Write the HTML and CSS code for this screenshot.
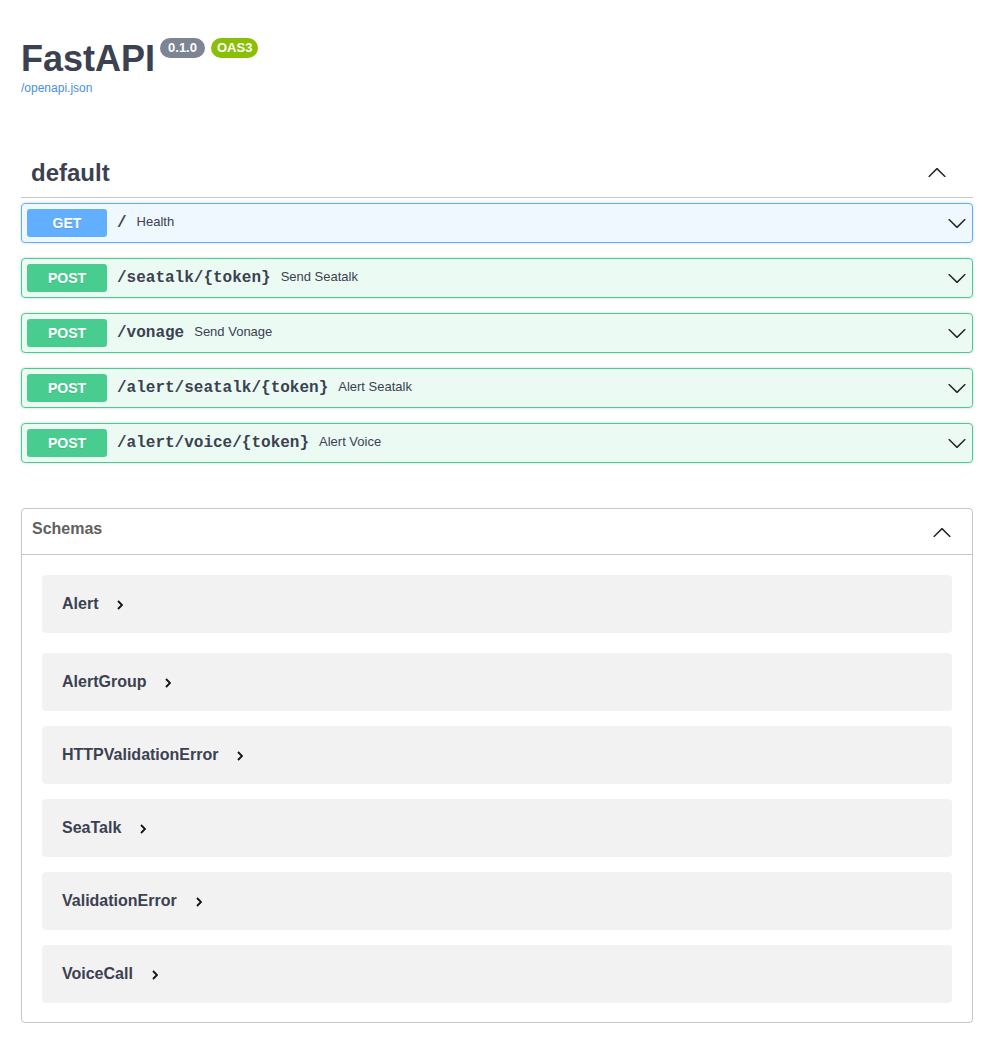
FILE: index.html
```html
<!DOCTYPE html>
<html>
<head>
<meta charset="utf-8">
<title>FastAPI - Swagger UI</title>
<link rel="stylesheet" href="styles.css">
</head>
<body>
<div class="wrapper">
  <div class="info">
    <div class="title-row">
      <h2 class="title">FastAPI</h2>
      <span class="badge badge-version">0.1.0</span>
      <span class="badge badge-oas">OAS3</span>
    </div>
    <a class="url" href="#">/openapi.json</a>
  </div>

  <section class="tag-section">
    <h3 class="tag">
      <span class="tag-name">default</span>
      <svg class="arrow arrow-tag" viewBox="0 0 20 20" width="20" height="20"><path d="M17.418 14.908c.272.268.709.268.979 0s.271-.701 0-.969l-7.908-7.83c-.27-.268-.707-.268-.979 0l-7.908 7.83c-.27.268-.27.701 0 .969.271.268.709.268.979 0L10 7.767l7.418 7.141z"/></svg>
    </h3>
    <div class="ops">
      <div class="opblock opblock-get">
        <span class="method">GET</span>
        <span class="path">/</span>
        <span class="desc">Health</span>
        <svg class="arrow arrow-op" viewBox="0 0 20 20" width="20" height="20"><path d="M17.418 6.109c.272-.268.709-.268.979 0s.271.701 0 .969l-7.908 7.83c-.27.268-.707.268-.979 0l-7.908-7.83c-.27-.268-.27-.701 0-.969.271-.268.709-.268.979 0L10 13.25l7.418-7.141z"/></svg>
      </div>
      <div class="opblock opblock-post">
        <span class="method">POST</span>
        <span class="path">/seatalk/{token}</span>
        <span class="desc">Send Seatalk</span>
        <svg class="arrow arrow-op" viewBox="0 0 20 20" width="20" height="20"><path d="M17.418 6.109c.272-.268.709-.268.979 0s.271.701 0 .969l-7.908 7.83c-.27.268-.707.268-.979 0l-7.908-7.83c-.27-.268-.27-.701 0-.969.271-.268.709-.268.979 0L10 13.25l7.418-7.141z"/></svg>
      </div>
      <div class="opblock opblock-post">
        <span class="method">POST</span>
        <span class="path">/vonage</span>
        <span class="desc">Send Vonage</span>
        <svg class="arrow arrow-op" viewBox="0 0 20 20" width="20" height="20"><path d="M17.418 6.109c.272-.268.709-.268.979 0s.271.701 0 .969l-7.908 7.83c-.27.268-.707.268-.979 0l-7.908-7.83c-.27-.268-.27-.701 0-.969.271-.268.709-.268.979 0L10 13.25l7.418-7.141z"/></svg>
      </div>
      <div class="opblock opblock-post">
        <span class="method">POST</span>
        <span class="path">/alert/seatalk/{token}</span>
        <span class="desc">Alert Seatalk</span>
        <svg class="arrow arrow-op" viewBox="0 0 20 20" width="20" height="20"><path d="M17.418 6.109c.272-.268.709-.268.979 0s.271.701 0 .969l-7.908 7.83c-.27.268-.707.268-.979 0l-7.908-7.83c-.27-.268-.27-.701 0-.969.271-.268.709-.268.979 0L10 13.25l7.418-7.141z"/></svg>
      </div>
      <div class="opblock opblock-post">
        <span class="method">POST</span>
        <span class="path">/alert/voice/{token}</span>
        <span class="desc">Alert Voice</span>
        <svg class="arrow arrow-op" viewBox="0 0 20 20" width="20" height="20"><path d="M17.418 6.109c.272-.268.709-.268.979 0s.271.701 0 .969l-7.908 7.83c-.27.268-.707.268-.979 0l-7.908-7.83c-.27-.268-.27-.701 0-.969.271-.268.709-.268.979 0L10 13.25l7.418-7.141z"/></svg>
      </div>
    </div>
  </section>

  <section class="models">
    <h4 class="models-head">
      <span class="models-title">Schemas</span>
      <svg class="arrow" viewBox="0 0 20 20" width="20" height="20"><path d="M17.418 14.908c.272.268.709.268.979 0s.271-.701 0-.969l-7.908-7.83c-.27-.268-.707-.268-.979 0l-7.908 7.830c-.27.268-.27.701 0 .969.271.268.709.268.979 0L10 7.767l7.418 7.141z"/></svg>
    </h4>
    <div class="models-body">
      <div class="model"><span class="model-title">Alert</span><svg class="toggle" viewBox="0 0 6 10" width="6" height="10"><polyline points="1,1 5,5 1,9"/></svg></div>
      <div class="model"><span class="model-title">AlertGroup</span><svg class="toggle" viewBox="0 0 6 10" width="6" height="10"><polyline points="1,1 5,5 1,9"/></svg></div>
      <div class="model"><span class="model-title">HTTPValidationError</span><svg class="toggle" viewBox="0 0 6 10" width="6" height="10"><polyline points="1,1 5,5 1,9"/></svg></div>
      <div class="model"><span class="model-title">SeaTalk</span><svg class="toggle" viewBox="0 0 6 10" width="6" height="10"><polyline points="1,1 5,5 1,9"/></svg></div>
      <div class="model"><span class="model-title">ValidationError</span><svg class="toggle" viewBox="0 0 6 10" width="6" height="10"><polyline points="1,1 5,5 1,9"/></svg></div>
      <div class="model"><span class="model-title">VoiceCall</span><svg class="toggle" viewBox="0 0 6 10" width="6" height="10"><polyline points="1,1 5,5 1,9"/></svg></div>
    </div>
  </section>
</div>
</body>
</html>
```

FILE: styles.css
```css
html, body {
  margin: 0;
  padding: 0;
  background: #fff;
}

body {
  font-family: "Liberation Sans", Arial, sans-serif;
  color: #3b4151;
}

.wrapper {
  padding: 0 15px 30px 21px;
}

.info {
  margin-top: 38px;
}

.title-row {
  display: flex;
  align-items: flex-start;
}

.title {
  margin: 0;
  font-size: 36px;
  line-height: 41px;
  font-weight: 700;
  color: #3b4151;
}

.badge {
  display: inline-block;
  margin-left: 5px;
  height: 20px;
  line-height: 20px;
  border-radius: 57px;
  font-size: 13px;
  font-weight: 700;
  color: #fff;
}

.badge-version {
  padding: 0 8px;
  background: #7d8492;
}

.badge-oas {
  margin-left: 6px;
  padding: 0 6px;
  background: #89bf04;
}

.url {
  display: block;
  margin-top: 2px;
  font-size: 12px;
  line-height: 14px;
  color: #4990e2;
  text-decoration: none;
}

.tag-section {
  margin-top: 54px;
}

.tag {
  display: flex;
  align-items: center;
  margin: 0 0 5px;
  padding: 10px 26px 10px 10px;
  font-size: 24px;
  line-height: 28px;
  font-weight: 700;
  border-bottom: 1px solid rgba(59, 65, 81, 0.3);
}

.tag-name {
  flex: 1;
}

.arrow {
  fill: #222;
  flex: none;
}

.arrow-tag {
  margin-top: -3px;
}

.ops {
  display: flex;
  flex-direction: column;
  gap: 15px;
}

.opblock {
  display: flex;
  align-items: center;
  height: 40px;
  box-sizing: border-box;
  padding: 0 5px;
  border: 1px solid;
  border-radius: 4px;
  box-shadow: 0 0 3px rgba(0, 0, 0, 0.19);
}

.opblock-get {
  background: rgba(97, 175, 254, 0.1);
  border-color: #61affe;
}

.opblock-post {
  background: rgba(73, 204, 144, 0.1);
  border-color: #49cc90;
}

.method {
  display: inline-block;
  min-width: 80px;
  height: 28px;
  line-height: 28px;
  text-align: center;
  border-radius: 3px;
  font-size: 14px;
  font-weight: 700;
  color: #fff;
  text-shadow: 0 1px 0 rgba(0, 0, 0, 0.1);
}

.opblock-get .method {
  background: #61affe;
}

.opblock-post .method {
  background: #49cc90;
}

.path {
  padding: 0 10px;
  font-family: "Liberation Mono", "Courier New", monospace;
  font-size: 16px;
  line-height: 20px;
  font-weight: 700;
  color: #3b4151;
}

.desc {
  flex: 1;
  font-size: 13px;
  line-height: 20px;
  margin-bottom: 2px;
  color: #3b4151;
}

.models {
  margin-top: 45px;
  border: 1px solid rgba(59, 65, 81, 0.3);
  border-radius: 4px;
}

.models-head {
  display: flex;
  align-items: center;
  margin: 0;
  height: 45px;
  padding: 0 20px 0 10px;
  border-bottom: 1px solid rgba(59, 65, 81, 0.3);
  font-size: 16px;
  font-weight: 700;
  color: #606060;
}

.models-title {
  flex: 1;
  margin-bottom: 6px;
}

.models-body {
  padding: 20px 20px 19px;
}

.model {
  display: flex;
  align-items: center;
  height: 58px;
  padding: 0 20px;
  margin-bottom: 15px;
  border-radius: 4px;
  background: rgba(0, 0, 0, 0.05);
}

.model:first-child {
  margin-bottom: 20px;
}

.model:last-child {
  margin-bottom: 0;
}

.model-title {
  font-size: 16px;
  font-weight: 700;
  color: #3b4151;
}

.toggle {
  margin-left: 19px;
  margin-top: 2px;
  fill: none;
  stroke: #111;
  stroke-width: 1.8;
}
```
